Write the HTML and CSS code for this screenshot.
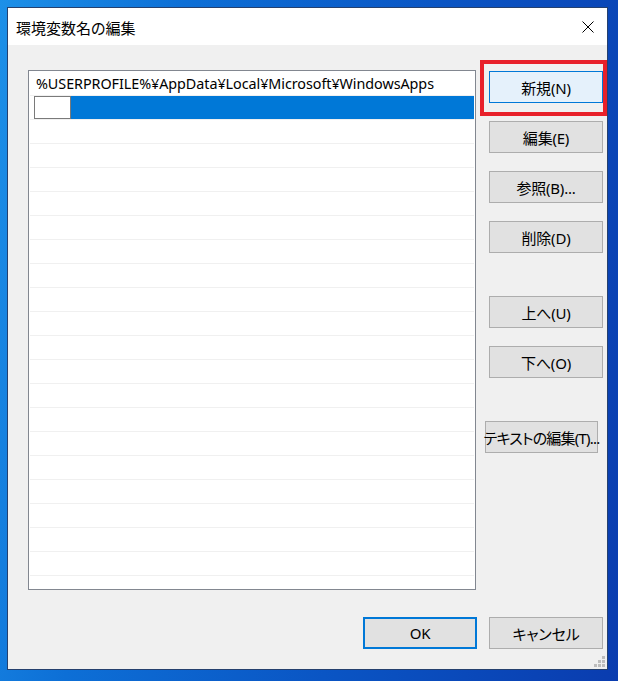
FILE: index.html
```html
<!DOCTYPE html>
<html lang="ja">
<head>
<meta charset="utf-8">
<title>環境変数名の編集</title>
<link rel="stylesheet" href="styles.css">
</head>
<body>
<div class="window">
  <div class="titlebar">
    <span class="title">環境変数名の編集</span>
    <svg class="close" width="12" height="12" viewBox="0 0 12 12"><path d="M0.5 0.5 L11.5 11.5 M11.5 0.5 L0.5 11.5" stroke="#000" stroke-width="1" fill="none"/></svg>
  </div>
  <div class="content">
    <div class="list">
      <div class="row"><span class="path">%USERPROFILE%¥AppData¥Local¥Microsoft¥WindowsApps</span></div>
      <div class="row selected"><div class="sel"><div class="editbox"></div></div></div>
      <div class="row"></div><div class="row"></div><div class="row"></div><div class="row"></div>
      <div class="row"></div><div class="row"></div><div class="row"></div><div class="row"></div>
      <div class="row"></div><div class="row"></div><div class="row"></div><div class="row"></div>
      <div class="row"></div><div class="row"></div><div class="row"></div><div class="row"></div>
      <div class="row"></div><div class="row"></div><div class="row"></div>
    </div>
    <div class="buttons">
      <div class="btn active">新規(N)</div>
      <div class="btn">編集(E)</div>
      <div class="btn">参照(B)...</div>
      <div class="btn">削除(D)</div>
      <div class="btn gap">上へ(U)</div>
      <div class="btn">下へ(O)</div>
      <div class="btn gap wide">テキストの編集(T)...</div>
    </div>
  </div>
  <div class="footer">
    <div class="btn ok">OK</div>
    <div class="btn">キャンセル</div>
  </div>
  <div class="highlight"></div>
  <svg class="grip" width="12" height="12" viewBox="0 0 12 12">
    <rect x="9" y="0" width="3" height="3" fill="#bdbdbd"/>
    <rect x="5" y="4" width="3" height="3" fill="#bdbdbd"/>
    <rect x="9" y="4" width="3" height="3" fill="#bdbdbd"/>
    <rect x="1" y="8" width="3" height="3" fill="#bdbdbd"/>
    <rect x="5" y="8" width="3" height="3" fill="#bdbdbd"/>
    <rect x="9" y="8" width="3" height="3" fill="#bdbdbd"/>
  </svg>
</div>
</body>
</html>
```
FILE: styles.css
```css
html, body {
  margin: 0;
  padding: 0;
  width: 618px;
  height: 681px;
  overflow: hidden;
}
body {
  background: linear-gradient(100deg, #1d90e8 0%, #0d6fd6 25%, #0a55c4 60%, #0a3caf 100%);
  padding: 7px;
  box-sizing: border-box;
  font-family: "Noto Sans", "Noto Sans CJK JP", sans-serif;
  font-size: 15px;
  color: #000;
}
.window {
  position: relative;
  width: 601px;
  height: 663px;
  box-sizing: border-box;
  border: 1px solid #25406e;
  background: #f0f0f0;
  display: flex;
  flex-direction: column;
}
.titlebar {
  height: 37px;
  background: #fff;
  display: flex;
  align-items: center;
  justify-content: space-between;
  padding: 0 13px 0 8px;
}
.title {
  font-family: "Noto Sans CJK JP", sans-serif;
  font-size: 15px;
  line-height: 1;
  color: #000;
  font-feature-settings: "palt";
  margin-top: 1px;
}
.close {
  display: block;
  margin-top: 1px;
}
.content {
  display: flex;
  padding: 25px 4px 0 20px;
}
.list {
  width: 448px;
  height: 520px;
  box-sizing: border-box;
  border: 1px solid #828790;
  background: #fff;
  padding: 1px 1px 0 1px;
}
.row {
  height: 23px;
  border-bottom: 1px solid #f0f0f0;
  display: flex;
  align-items: center;
}
.path {
  padding-left: 6px;
  font-family: "Noto Sans", "Noto Sans CJK JP", sans-serif;
  font-size: 14.35px;
  color: #000;
  white-space: nowrap;
  letter-spacing: -0.05px;
}
.row.selected {
  align-items: stretch;
}
.sel {
  flex: 1;
  margin-left: 4px;
  background: #0078d7;
  display: flex;
}
.editbox {
  width: 37px;
  box-sizing: border-box;
  border: 1px solid #7a7a7a;
  background: #fff;
}
.buttons {
  margin-left: 13px;
  padding-top: 1px;
  width: 114px;
  display: flex;
  flex-direction: column;
  gap: 18px;
}
.btn {
  height: 32px;
  width: 114px;
  box-sizing: border-box;
  background: #e1e1e1;
  border: 1px solid #adadad;
  display: flex;
  align-items: center;
  justify-content: center;
  font-family: "Noto Sans", "Noto Sans CJK JP", sans-serif;
  font-size: 15px;
  font-feature-settings: "palt";
  color: #000;
  white-space: nowrap;
  letter-spacing: -0.2px;
}
.btn.active {
  background: #e5f1fb;
  border-color: #0078d7;
}
.btn.gap {
  margin-top: 25px;
}
.btn.wide {
  width: 113px;
  margin-left: -4px;
  letter-spacing: -0.8px;
}
.footer {
  display: flex;
  justify-content: flex-end;
  gap: 12px;
  padding: 27px 4px 0 0;
}
.btn.ok {
  border: 2px solid #0078d7;
}
.highlight {
  position: absolute;
  left: 472px;
  top: 52px;
  width: 127px;
  height: 56px;
  box-sizing: border-box;
  border: 4px solid #e8202a;
}
.grip {
  position: absolute;
  right: 2px;
  bottom: 1px;
}
```
